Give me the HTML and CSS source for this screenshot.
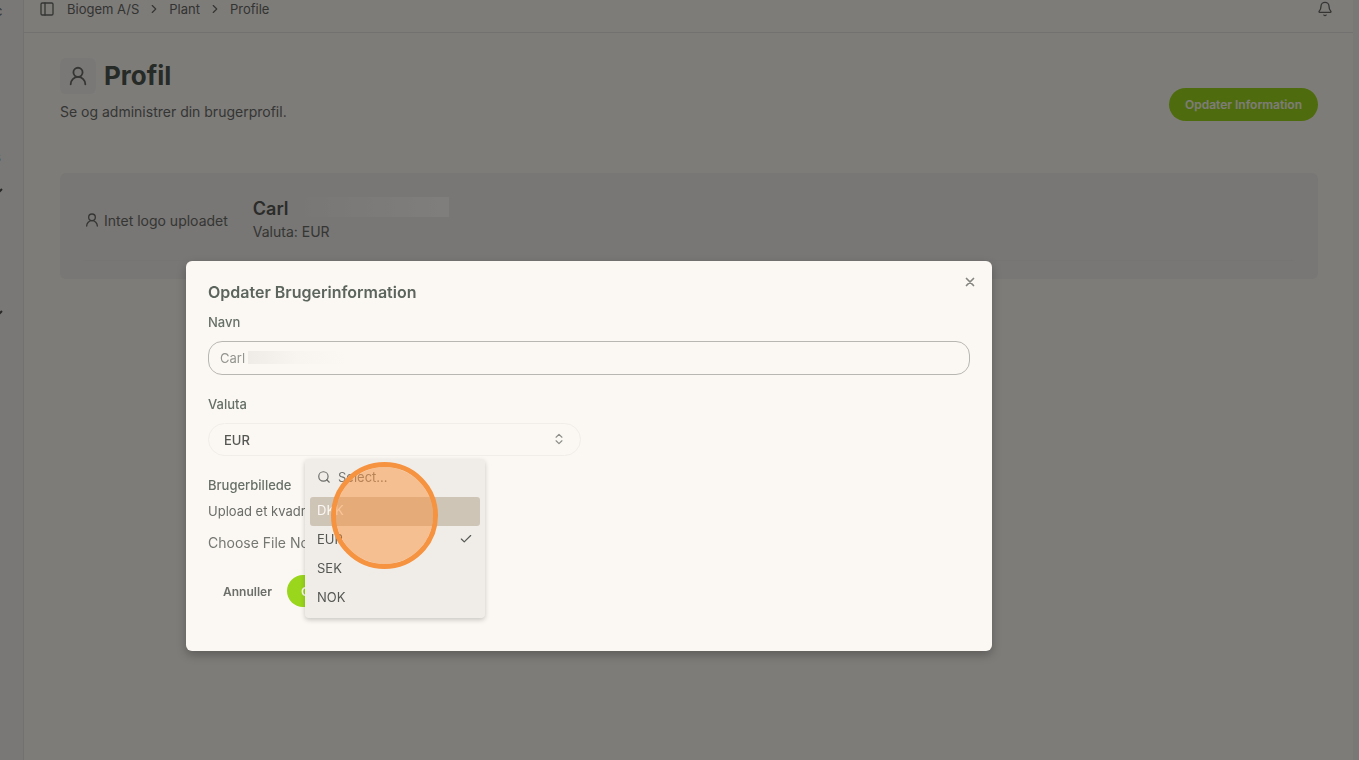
FILE: index.html
```html
<!DOCTYPE html>
<html lang="da">
<head>
    <meta charset="UTF-8">
    <meta name="viewport" content="width=device-width, initial-scale=1.0">
    <title>Profil</title>
    <link rel="stylesheet" href="styles.css">
</head>
<body>
    <div class="app">
        <aside class="sidebar">
            <span class="side-text">c</span>
            <span class="side-text side-small">s</span>
            <svg class="side-chevron" viewBox="0 0 10 10"><path d="M1 3l4 4 4-4"/></svg>
            <svg class="side-chevron side-last" viewBox="0 0 10 10"><path d="M1 3l4 4 4-4"/></svg>
        </aside>
        <div class="page">
            <header class="topbar">
                <svg class="icon panel-icon" viewBox="0 0 24 24"><rect x="3" y="3" width="18" height="18" rx="2"/><path d="M9 3v18"/></svg>
                <nav class="breadcrumb">
                    <a href="#">Biogem A/S</a>
                    <svg class="icon crumb-icon" viewBox="0 0 24 24"><path d="m9 18 6-6-6-6"/></svg>
                    <a href="#">Plant</a>
                    <svg class="icon crumb-icon" viewBox="0 0 24 24"><path d="m9 18 6-6-6-6"/></svg>
                    <a href="#">Profile</a>
                </nav>
                <svg class="icon bell-icon" viewBox="0 0 24 24"><path d="M10.3 21a2 2 0 0 0 3.4 0"/><path d="M3.3 15.3A1 1 0 0 0 4 17h16a1 1 0 0 0 .7-1.7C19.4 14 18 12.5 18 8A6 6 0 0 0 6 8c0 4.500-1.400 6-2.700 7.300"/></svg>
            </header>
            <main class="content">
                <div class="page-header">
                    <div class="heading">
                        <div class="title-row">
                            <span class="title-icon">
                                <svg class="icon" viewBox="0 0 24 24"><circle cx="12" cy="8" r="5"/><path d="M20 21a8 8 0 0 0-16 0"/></svg>
                            </span>
                            <h1>Profil</h1>
                        </div>
                        <p>Se og administrer din brugerprofil.</p>
                    </div>
                    <button type="button" class="btn-primary">Opdater Information</button>
                </div>
                <section class="card">
                    <div class="card-body">
                        <div class="no-logo">
                            <svg class="icon" viewBox="0 0 24 24"><circle cx="12" cy="8" r="5"/><path d="M20 21a8 8 0 0 0-16 0"/></svg>
                            <span>Intet logo uploadet</span>
                        </div>
                        <div class="user">
                            <h2>Carl <span class="name-mask"></span></h2>
                            <p>Valuta: EUR</p>
                        </div>
                    </div>
                </section>
            </main>
        </div>
        <div class="scroll-edge"></div>
    </div>

    <div class="overlay"></div>

    <form class="modal" role="dialog" aria-labelledby="modal-title">
        <button type="button" class="close" aria-label="Luk">
            <svg class="icon" viewBox="0 0 24 24"><path d="M18 6 6 18M6 6l12 12"/></svg>
        </button>
        <h2 id="modal-title">Opdater Brugerinformation</h2>
        <label for="name">Navn</label>
        <div class="name-field">
            <input type="text" id="name" value="Carl">
            <span class="input-mask"></span>
        </div>
        <label for="currency">Valuta</label>
        <div class="select-field">
            <select id="currency">
                <option>DKK</option>
                <option selected>EUR</option>
                <option>SEK</option>
                <option>NOK</option>
            </select>
            <svg class="icon sort-icon" viewBox="0 0 24 24"><path d="m7 15 5 5 5-5"/><path d="m7 9 5-5 5 5"/></svg>
            <div class="menu">
                <div class="search">
                    <svg class="icon" viewBox="0 0 24 24"><circle cx="11" cy="11" r="8"/><path d="m21 21-4.300-4.300"/></svg>
                    <input type="text" placeholder="Select..." aria-label="Select">
                </div>
                <button type="button" class="item active">DKK</button>
                <button type="button" class="item">EUR
                    <svg class="icon" viewBox="0 0 24 24"><path d="M20 6 9 17l-5-5"/></svg>
                </button>
                <button type="button" class="item">SEK</button>
                <button type="button" class="item">NOK</button>
                <span class="click-marker"></span>
            </div>
        </div>
        <label for="picture">Brugerbillede</label>
        <p class="hint">Upload et kvadratisk billede</p>
        <input type="file" id="picture">
        <div class="actions">
            <button type="button" class="btn-text">Annuller</button>
            <button type="submit" class="btn-save">Gem</button>
        </div>
    </form>
</body>
</html>
```

FILE: styles.css
```css
* {
    margin: 0;
    padding: 0;
    box-sizing: border-box;
    font-family: Inter, "Liberation Sans", sans-serif;
}

body {
    background: #fcf8f3;
    color: #6a6c68;
    overflow: hidden;
}

button {
    border: none;
    background: none;
    cursor: pointer;
}

.icon {
    width: 16px;
    height: 16px;
    flex: none;
    fill: none;
    stroke: currentColor;
    stroke-width: 2;
    stroke-linecap: round;
    stroke-linejoin: round;
}

.app {
    display: flex;
    min-height: 100vh;
}

.sidebar {
    display: flex;
    flex-direction: column;
    width: 24px;
    background: #f4f1ed;
    border-right: 1px solid #e6e3df;
    overflow: hidden;
}

.side-text {
    margin-left: -5px;
    font-size: 13px;
    line-height: 22px;
}

.side-small {
    margin-top: 124px;
    margin-left: -6px;
}

.side-chevron {
    width: 10px;
    height: 10px;
    margin-top: 18px;
    margin-left: -7px;
    fill: none;
    stroke: #50524e;
    stroke-width: 2;
}

.side-last {
    margin-top: 112px;
}

.page {
    flex: 1;
}

.scroll-edge {
    width: 6px;
    background: #f4f1ed;
}

.topbar {
    display: flex;
    align-items: center;
    height: 33px;
    padding: 0 20px 14px 15px;
    border-bottom: 1px solid #e6e3df;
}

.panel-icon {
    margin-right: 12px;
}

.breadcrumb {
    display: flex;
    align-items: center;
    gap: 8px;
    flex: 1;
}

.breadcrumb a {
    color: #666864;
    font-size: 13px;
    text-decoration: none;
}

.crumb-icon {
    width: 14px;
    height: 14px;
}

.content {
    padding: 25px 35px 25px 36px;
}

.page-header {
    display: flex;
    align-items: center;
    justify-content: space-between;
    min-height: 92px;
    margin-bottom: 23px;
}

.heading {
    align-self: flex-start;
}

.title-row {
    display: flex;
    align-items: center;
    gap: 8px;
    margin-bottom: 8px;
}

.title-icon {
    display: flex;
    align-items: center;
    justify-content: center;
    width: 36px;
    height: 36px;
    border-radius: 6px;
    background: #f5f1ed;
}

.title-icon .icon {
    width: 22px;
    height: 22px;
}

h1 {
    color: #4c564e;
    font-size: 26px;
    line-height: 34px;
}

.heading p {
    font-size: 14px;
    line-height: 20px;
}

.btn-primary {
    height: 33px;
    padding: 0 16px;
    border-radius: 17px;
    background: #9cd81a;
    color: #fcf8f3;
    font-size: 12px;
    font-weight: 600;
}

.card {
    padding: 24px 24px 18px;
    border-radius: 6px;
    background: #f1eeea;
}

.card-body {
    display: flex;
    gap: 25px;
    padding-bottom: 17px;
    border-bottom: 1px solid #eeebe7;
}

.no-logo {
    display: flex;
    align-items: center;
    gap: 4px;
    font-size: 14px;
}

.user h2 {
    display: flex;
    align-items: center;
    color: #565854;
    font-size: 18px;
    font-weight: 600;
    line-height: 24px;
}

.name-mask {
    align-self: flex-start;
    width: 158px;
    height: 20px;
    margin-left: 2px;
    background: linear-gradient(90deg, #f1eeea, #fffdf9);
}

.user p {
    font-size: 14px;
    line-height: 22px;
}

.overlay {
    position: fixed;
    inset: 0;
    background: rgba(0, 0, 0, 0.5);
}

.modal {
    position: absolute;
    top: 261px;
    left: 186px;
    display: flex;
    flex-direction: column;
    width: 806px;
    max-width: 100%;
    padding: 20px 22px 44px;
    border-radius: 6px;
    background: #fbf8f3;
    box-shadow: 0 4px 10px rgba(0, 0, 0, 0.25);
}

.modal h2 {
    color: #5c655d;
    font-size: 16px;
    font-weight: 600;
    line-height: 22px;
    margin-bottom: 10px;
}

.close {
    position: absolute;
    top: 14px;
    right: 15px;
    display: flex;
    color: #858681;
}

.close .icon {
    width: 14px;
    height: 14px;
    stroke-width: 3;
}

.modal label {
    color: #667067;
    font-size: 13px;
    font-weight: 500;
    line-height: 18px;
    margin-bottom: 10px;
}

.name-field {
    position: relative;
    margin-bottom: 20px;
}

.name-field input {
    display: block;
    width: 100%;
    height: 34px;
    padding: 0 11px;
    border: 1px solid #b9b7b1;
    border-radius: 14px;
    background: transparent;
    color: #94958f;
    font-size: 13px;
}

.input-mask {
    position: absolute;
    top: 10px;
    left: 40px;
    width: 98px;
    height: 13px;
    background: linear-gradient(90deg, #efece8, #f8f5f0 50%, #fbf8f3);
}

.select-field {
    position: relative;
    width: 373px;
    margin-bottom: 20px;
}

.select-field select {
    display: block;
    width: 100%;
    height: 33px;
    padding: 0 15px;
    appearance: none;
    border: 1px solid #f1eeea;
    border-radius: 17px;
    background: transparent;
    color: #555753;
    font-size: 13px;
    font-weight: 500;
}

.sort-icon {
    position: absolute;
    top: 9px;
    right: 15px;
    width: 14px;
    height: 14px;
    color: #8c8d88;
}

.menu {
    position: absolute;
    top: 36px;
    left: 97px;
    width: 180px;
    padding: 0 5px 5px;
    border-radius: 4px;
    background: #f0ede9;
    box-shadow: 0 2px 5px rgba(0, 0, 0, 0.2);
}

.search {
    display: flex;
    align-items: center;
    gap: 7px;
    height: 38px;
    padding: 0 7px 3px;
}

.search .icon {
    width: 14px;
    height: 14px;
}

.search input {
    width: 100%;
    border: none;
    background: transparent;
    font-size: 13px;
}

.search input::placeholder {
    color: #72736f;
}

.item {
    display: flex;
    align-items: center;
    justify-content: space-between;
    width: 100%;
    height: 29px;
    padding: 0 7px 3px;
    border-radius: 3px;
    color: #555753;
    font-size: 13px;
}

.item .icon {
    width: 14px;
    height: 14px;
}

.item.active {
    background: #cfc5b7;
    color: #fbf8f3;
}

.click-marker {
    position: absolute;
    top: 3px;
    left: 26px;
    width: 107px;
    height: 107px;
    border: 5px solid #f69340;
    border-radius: 50%;
    background: rgba(251, 146, 60, 0.5);
    background-clip: padding-box;
}

.hint {
    font-size: 13px;
    line-height: 18px;
    margin-top: -2px;
    margin-bottom: 13px;
}

.modal input[type="file"] {
    height: 20px;
    color: #757772;
    font-size: 14px;
    line-height: 20px;
    margin-bottom: 22px;
}

input[type="file"]::file-selector-button {
    border: none;
    background: none;
    padding: 0;
    margin: 0 4px 0 0;
    color: #757772;
    font-family: Inter, "Liberation Sans", sans-serif;
    font-size: 14px;
    line-height: 20px;
}

.actions {
    display: flex;
    gap: 15px;
    padding-left: 15px;
}

.btn-text,
.btn-save {
    height: 32px;
    color: #6c6e69;
    font-size: 12px;
    font-weight: 600;
}

.btn-save {
    padding: 0 14px;
    border-radius: 16px;
    background: #9ad61c;
    color: #fbf8f3;
}
```
